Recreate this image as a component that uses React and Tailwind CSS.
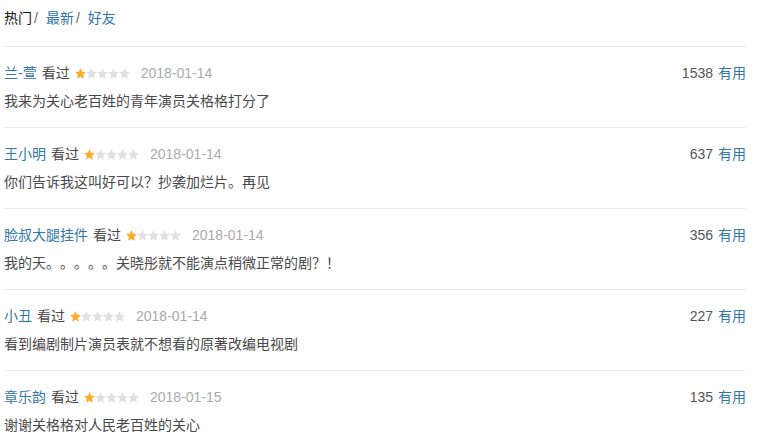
import React from 'react';

const comments = [
    { name: '兰-萱', date: '2018-01-14', votes: 1538, text: '我来为关心老百姓的青年演员关格格打分了' },
    { name: '王小明', date: '2018-01-14', votes: 637, text: '你们告诉我这叫好可以？抄袭加烂片。再见' },
    { name: '脸叔大腿挂件', date: '2018-01-14', votes: 356, text: '我的天。。。。。关晓彤就不能演点稍微正常的剧？！' },
    { name: '小丑', date: '2018-01-14', votes: 227, text: '看到编剧制片演员表就不想看的原著改编电视剧' },
    { name: '章乐韵', date: '2018-01-15', votes: 135, text: '谢谢关格格对人民老百姓的关心' },
];

const Star = ({ on }) => (
    <svg width="11" height="11" viewBox="0 0 24 24">
        <polygon
            points="12,0 15.5,8 24,8.8 17.6,14.6 19.4,23.5 12,19 4.6,23.5 6.4,14.6 0,8.8 8.5,8"
            fill={on ? '#ffac2d' : '#e0e0e0'}
        />
    </svg>
);

const Stars = ({ n }) => (
    <span className="flex items-center">
        {[0, 1, 2, 3, 4].map((i) => <Star key={i} on={i < n} />)}
    </span>
);

export default function App() {
    return (
        <div
            className="w-[765px] h-[446px] bg-white overflow-hidden pl-1 pr-[19px] text-[14px] text-[#494949] [text-spacing-trim:space-all]"
            style={{ fontFamily: '"Liberation Sans", "Noto Sans CJK SC", sans-serif' }}
        >
            {/* Tabs */}
            <div className="pt-2 h-[46px] leading-5 flex items-start">
                <span className="text-[#111]">热门</span>
                <span className="text-[#666] ml-[2px]">/</span>
                <span className="text-[#3377aa] ml-[8px]">最新</span>
                <span className="text-[#666] ml-[2px]">/</span>
                <span className="text-[#3377aa] ml-[8px]">好友</span>
            </div>

            {comments.map((c) => (
                <div key={c.name} className="border-t border-[#eaeaea] pt-[16px] pb-[16px]">
                    <div className="flex items-center justify-between leading-5 h-5">
                        <div className="flex items-center">
                            <span className="text-[#3377aa]">{c.name}</span>
                            <span className="ml-[5px] text-[#494949]">看过</span>
                            <span className="ml-[5px]"><Stars n={1} /></span>
                            <span className="ml-[11px] text-[#aaa]">{c.date}</span>
                        </div>
                        <div className="flex items-center">
                            <span className="text-[#555]">{c.votes}</span>
                            <span className="ml-[5px] text-[#3377aa]">有用</span>
                        </div>
                    </div>
                    <p className="mt-2 leading-5 h-5 text-[#494949]">{c.text}</p>
                </div>
            ))}
        </div>
    );
}
